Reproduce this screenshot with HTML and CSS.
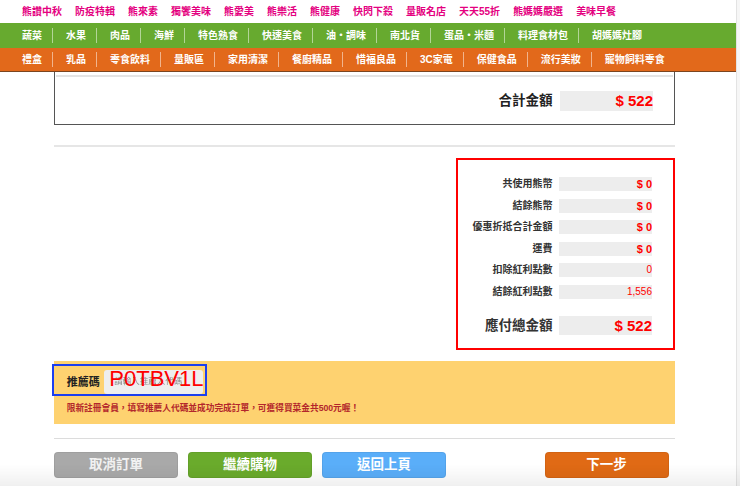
FILE: index.html
```html
<!DOCTYPE html>
<html lang="zh-Hant">
<head>
<meta charset="utf-8">
<title>購物車 - 結帳</title>
<link rel="stylesheet" href="styles.css">
</head>
<body>
<div class="page">
  <nav class="nav nav-pink">
    <a>熊讚中秋</a><a>防疫特輯</a><a>熊來素</a><a>獨饗美味</a><a>熊愛美</a><a>熊樂活</a><a>熊健康</a><a>快閃下殺</a><a>量販名店</a><a>天天55折</a><a>熊媽媽嚴選</a><a>美味早餐</a>
  </nav>
  <nav class="nav nav-bar nav-green">
    <a>蔬菜</a><a>水果</a><a>肉品</a><a>海鮮</a><a>特色熟食</a><a>快速美食</a><a>油・調味</a><a>南北貨</a><a>蛋品・米麵</a><a>料理食材包</a><a>胡媽媽灶腳</a>
  </nav>
  <nav class="nav nav-bar nav-orange">
    <a>禮盒</a><a>乳品</a><a>零食飲料</a><a>量販區</a><a>家用清潔</a><a>餐廚精品</a><a>惜福良品</a><a>3C家電</a><a>保健食品</a><a>流行美妝</a><a>寵物飼料零食</a>
  </nav>

  <main class="main">
    <section class="cart-box">
      <div class="cart-rule"></div>
      <div class="sum-row">
        <span class="sum-label">合計金額</span>
        <span class="sum-field">$ 522</span>
      </div>
    </section>

    <div class="divider"></div>

    <section class="summary">
      <div class="s-row"><span class="s-label">共使用熊幣</span><span class="s-field">$ 0</span></div>
      <div class="s-row"><span class="s-label">結餘熊幣</span><span class="s-field">$ 0</span></div>
      <div class="s-row"><span class="s-label">優惠折抵合計金額</span><span class="s-field">$ 0</span></div>
      <div class="s-row"><span class="s-label">運費</span><span class="s-field">$ 0</span></div>
      <div class="s-row"><span class="s-label">扣除紅利點數</span><span class="s-field plain">0</span></div>
      <div class="s-row"><span class="s-label">結餘紅利點數</span><span class="s-field plain">1,556</span></div>
      <div class="s-row s-total"><span class="s-label">應付總金額</span><span class="s-field">$ 522</span></div>
    </section>

    <section class="referral">
      <div class="ref-code">
        <span class="ref-label">推薦碼</span>
        <div class="ref-input">
          <span class="ref-placeholder">請輸入推薦人代碼</span>
          <span class="ref-value">P0TBV1L</span>
        </div>
      </div>
      <p class="ref-note">限新註冊會員，填寫推薦人代碼並成功完成訂單，可獲得買菜金共500元喔！</p>
    </section>

    <div class="actions-rule"></div>
    <div class="actions">
      <button class="btn btn-gray">取消訂單</button>
      <button class="btn btn-green">繼續購物</button>
      <button class="btn btn-blue">返回上頁</button>
      <button class="btn btn-orange">下一步</button>
    </div>
  </main>
</div>
<div class="bottom-fade"></div>
</body>
</html>
```

FILE: styles.css
```css
* { box-sizing: border-box; }
html, body { margin: 0; padding: 0; }
body {
  background: #f6f6f6;
  font-family: "Liberation Sans", "Noto Sans CJK TC", sans-serif;
  color: #333;
  overflow: hidden;
}
.page {
  width: 737px;
  min-height: 486px;
  background: #fff;
  border-right: 1px solid #e3e3e3;
}

/* navigation */
.nav {
  display: flex;
  align-items: center;
  padding-left: 22px;
  font-size: 10px;
  font-weight: 700;
  white-space: nowrap;
  line-height: 1;
}
.nav a { color: inherit; text-decoration: none; display: flex; align-items: center; }
.nav-pink { height: 23px; color: #e4007f; gap: 13px; }
.nav-green { height: 25px; background: #67aa2f; color: #fff; }
.nav-orange { height: 24px; background: #e2691b; color: #fff; border-bottom: 1px solid #7b4520; }
.nav-bar a + a::before {
  content: "";
  width: 1px;
  height: 15px;
  background: rgba(255, 255, 255, 0.5);
  margin: 0 13px 0 10px;
}

/* main */
.main { margin-left: 54px; width: 621px; }

.cart-box {
  border: 1px solid #555;
  border-top: 0;
  padding: 3px 1px 13px;
}
.cart-rule { height: 2px; background: #e4e4e4; }
.sum-row {
  display: flex;
  justify-content: flex-end;
  align-items: center;
  gap: 7.5px;
  margin-top: 14px;
  padding-right: 20px;
}
.sum-label { font-size: 13.5px; font-weight: 700; color: #222; line-height: 20px; }
.sum-field {
  width: 93px;
  height: 20px;
  background: #ededed;
  text-align: right;
  color: #f00;
  font-size: 15px;
  font-weight: 700;
  line-height: 20px;
}

.divider { margin-top: 19.5px; height: 2px; background: #e6e6e6; }

.summary {
  margin: 11px 0 0 402px;
  width: 219px;
  border: 2px solid #f00;
  padding: 17.5px 21px 13px 0;
  display: flex;
  flex-direction: column;
  gap: 7.5px;
}
.s-row {
  display: flex;
  justify-content: flex-end;
  align-items: center;
  gap: 6.5px;
  height: 14px;
}
.s-label { font-size: 10px; font-weight: 700; color: #333; line-height: 14px; white-space: nowrap; }
.s-field {
  width: 93px;
  height: 14px;
  background: #ededed;
  text-align: right;
  color: #f00;
  font-size: 11px;
  font-weight: 700;
  line-height: 14px;
}
.s-field.plain { font-weight: 400; font-size: 10px; }
.s-total { height: 19.5px; margin-top: 9.7px; }
.s-total .s-label { font-size: 13.5px; line-height: 19.5px; }
.s-total .s-field { height: 19.5px; line-height: 19.5px; font-size: 15px; }

/* referral */
.referral {
  margin-top: 11px;
  background: #fed270;
  padding: 3px 0 10.8px;
}
.ref-code {
  width: 154.5px;
  height: 32px;
  margin-left: -1.7px;
  border: 2px solid #1c3ff0;
  padding: 4px 1.5px 0 12.5px;
  display: flex;
  align-items: flex-start;
  gap: 4.5px;
}
.ref-label {
  font-size: 11px;
  font-weight: 700;
  color: #222;
  line-height: 14px;
  margin-top: 5px;
  white-space: nowrap;
}
.ref-input {
  position: relative;
  width: 100px;
  height: 23.5px;
  background: #eeeeee;
  border-radius: 3px;
}
.ref-placeholder {
  display: block;
  padding-left: 10px;
  font-size: 8.5px;
  line-height: 23.5px;
  color: #8a8a8a;
  filter: blur(0.7px);
  white-space: nowrap;
}
.ref-value {
  position: absolute;
  left: 5px;
  top: -2px;
  font-family: "Liberation Sans", sans-serif;
  font-size: 22px;
  line-height: 22px;
  color: #f00;
  white-space: nowrap;
}
.ref-note {
  margin: 5.5px 0 0 12.7px;
  font-size: 8.7px;
  font-weight: 700;
  line-height: 12px;
  color: #b3262b;
  white-space: nowrap;
}

/* actions */
.actions-rule { margin-top: 13.7px; height: 1px; background: #dcdcdc; }
.actions {
  display: flex;
  gap: 10px;
  margin-top: 13px;
  padding-right: 6.5px;
}
.btn {
  width: 124px;
  height: 26px;
  border-radius: 4px;
  border: 1px solid rgba(0, 0, 0, 0.06);
  color: #fff;
  font-family: inherit;
  font-size: 13.5px;
  font-weight: 700;
  line-height: 1;
  padding: 0;
}
.btn-gray { background: #a9a9a9; color: #f2f2f2; }
.btn-green { background: #6aab2c; }
.btn-blue { background: #5aaef9; }
.btn-orange { background: #e06a15; margin-left: auto; }

.bottom-fade {
  position: fixed;
  left: 0;
  right: 0;
  bottom: 0;
  height: 22px;
  background: linear-gradient(rgba(0, 0, 0, 0), rgba(0, 0, 0, 0.06));
  pointer-events: none;
}
```
